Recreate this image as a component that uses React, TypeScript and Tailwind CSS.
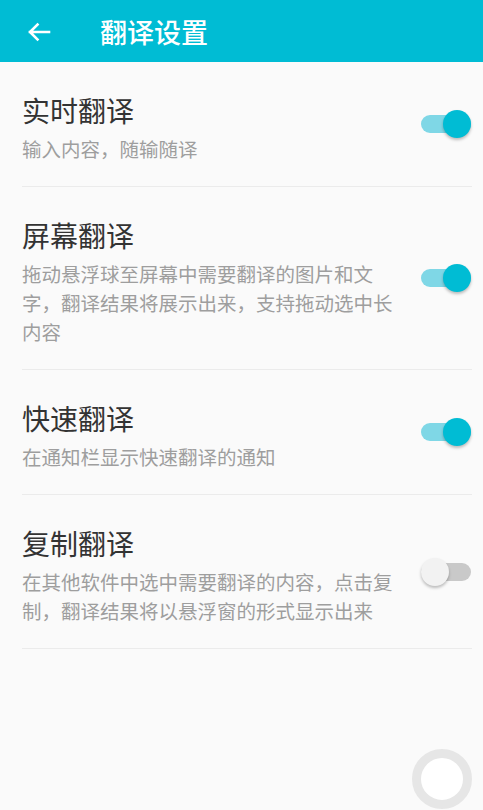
import React from "react";

type Setting = {
  title: string;
  lines: string[];
  on: boolean;
};

const settings: Setting[] = [
  { title: "实时翻译", lines: ["输入内容，随输随译"], on: true },
  {
    title: "屏幕翻译",
    lines: [
      "拖动悬浮球至屏幕中需要翻译的图片和文",
      "字，翻译结果将展示出来，支持拖动选中长",
      "内容",
    ],
    on: true,
  },
  { title: "快速翻译", lines: ["在通知栏显示快速翻译的通知"], on: true },
  {
    title: "复制翻译",
    lines: [
      "在其他软件中选中需要翻译的内容，点击复",
      "制，翻译结果将以悬浮窗的形式显示出来",
    ],
    on: false,
  },
];

function Toggle({ on }: { on: boolean }) {
  return (
    <div className="relative w-[50px] h-[28px] flex items-center shrink-0">
      <div
        className={
          on
            ? "w-full h-[18px] rounded-full bg-[#7fd7e6]"
            : "w-full h-[18px] rounded-full bg-[#c9c9c9]"
        }
      />
      {on ? (
        <div className="absolute right-0 top-0 w-[28px] h-[28px] rounded-full bg-[#00bcd4] shadow-[0_2px_3px_rgba(0,0,0,0.25)]" />
      ) : (
        <div className="absolute left-0 top-0 w-[28px] h-[28px] rounded-full bg-[#f2f2f2] shadow-[0_2px_3px_rgba(0,0,0,0.25)]" />
      )}
    </div>
  );
}

function BackArrow() {
  return (
    <svg width="24" height="20" viewBox="0 0 24 20" fill="none">
      <path
        d="M22 10H3M10.5 2.5L3 10l7.5 7.5"
        stroke="#fff"
        strokeWidth="2.6"
        strokeLinecap="square"
      />
    </svg>
  );
}

export default function App() {
  return (
    <div className="relative w-[483px] h-[810px] overflow-hidden bg-[#fafafa] font-['Noto_Sans_CJK_SC','Noto_Sans',sans-serif]">
      <header className="h-[62px] bg-[#00bcd4] flex items-center">
        <div className="ml-[27px] mt-[2px] flex items-center">
          <BackArrow />
        </div>
        <h1 className="ml-[49px] text-[27px] leading-none font-medium text-white">
          翻译设置
        </h1>
      </header>

      <div className="flex flex-col mx-[22px] w-[450px]">
        {settings.map((s) => (
          <div
            key={s.title}
            className="flex items-center justify-between border-b border-[#ebebeb]"
          >
            <div className="pt-[30px] pb-[23px]">
              <div className="text-[28px] leading-[36px] text-[#333333]">
                {s.title}
              </div>
              <div className="mt-[6px] text-[19.5px] leading-[29px] text-[#9e9e9e]">
                {s.lines.map((l) => (
                  <div key={l}>{l}</div>
                ))}
              </div>
            </div>
            <div className="mr-[1px]">
              <Toggle on={s.on} />
            </div>
          </div>
        ))}
      </div>

      <div className="absolute left-[412px] top-[749px] w-[60px] h-[60px] rounded-full border-[9px] border-[#e6e6e6] bg-white" />
    </div>
  );
}
